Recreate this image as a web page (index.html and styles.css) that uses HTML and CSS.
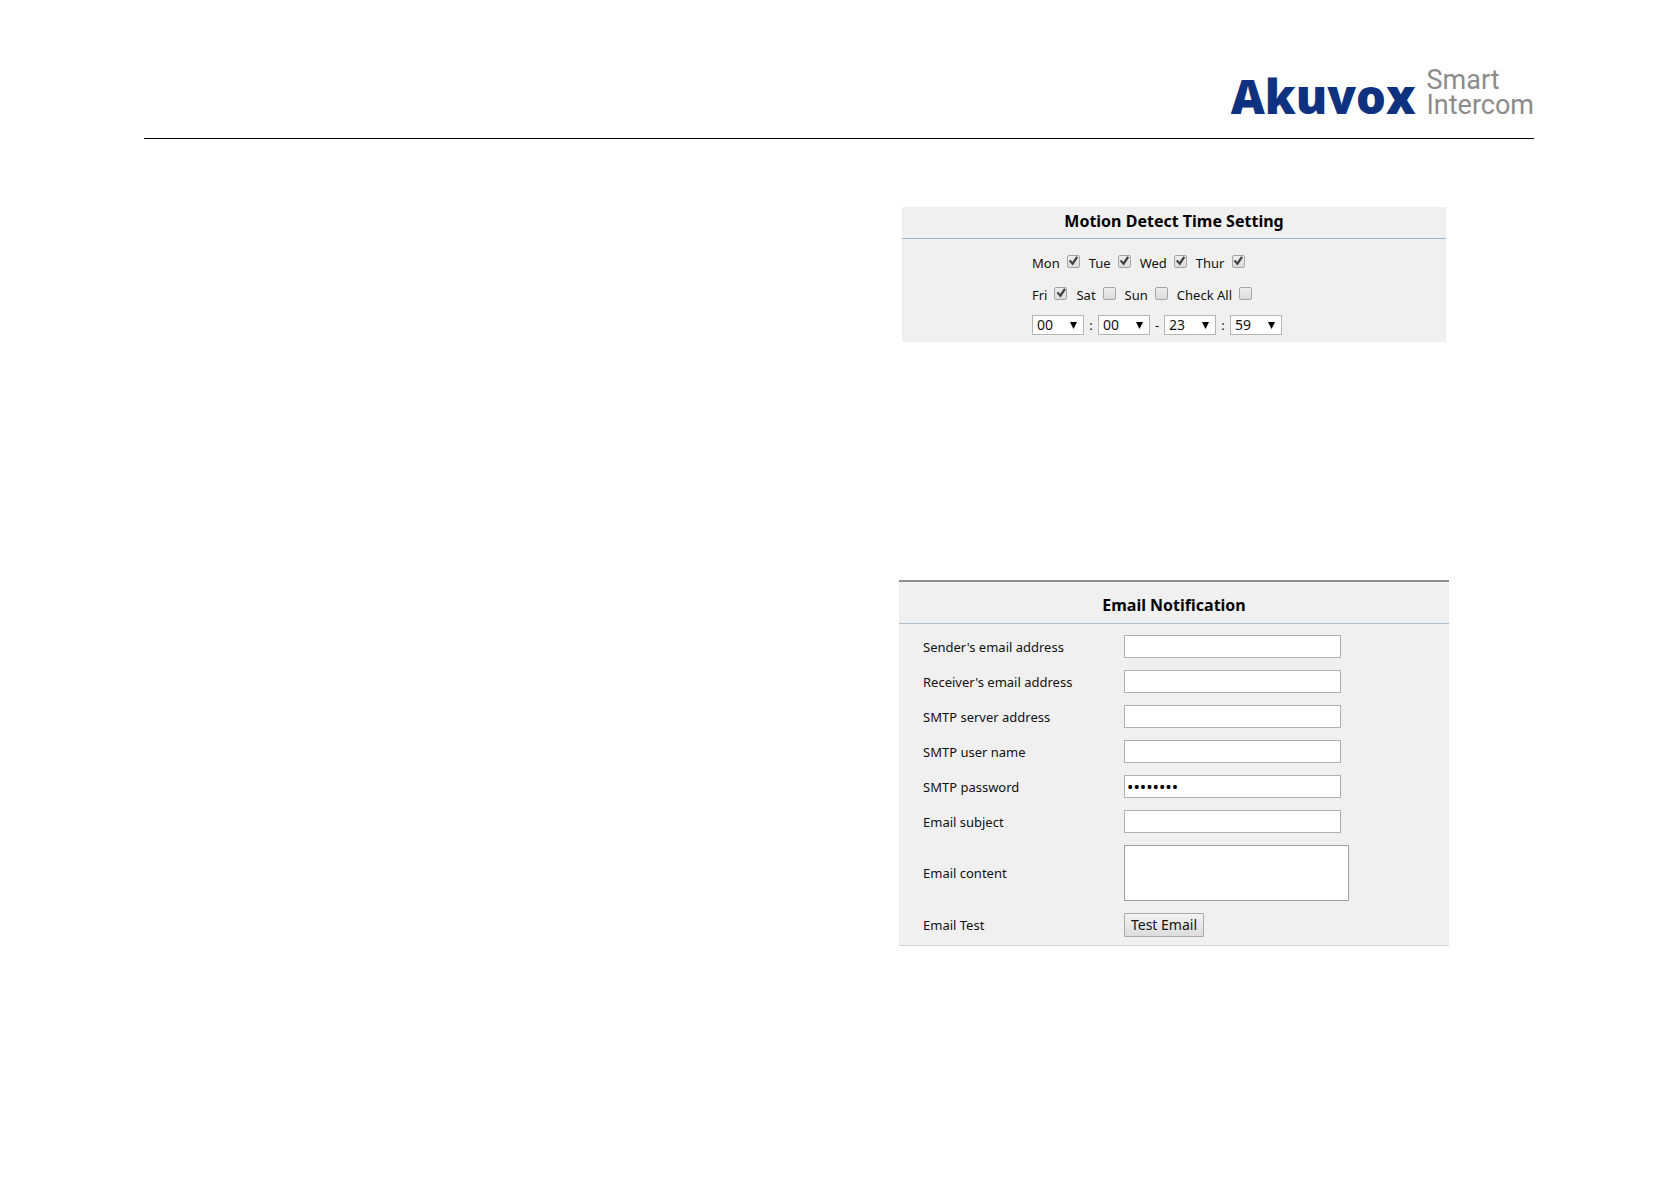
FILE: index.html
```html
<!DOCTYPE html>
<html lang="en">
<head>
    <meta charset="UTF-8">
    <meta name="viewport" content="width=device-width, initial-scale=1.0">
    <title>Akuvox Smart Intercom</title>
    <link rel="stylesheet" href="styles.css">
</head>
<body>
    <header class="page-header">
        <div class="logo">
            <div class="brand">Akuvox</div>
            <div class="tagline">
                <div>Smart</div>
                <div>Intercom</div>
            </div>
        </div>
    </header>

    <main class="content">
        <!-- Motion detect schedule -->
        <section class="panel motion">
            <h2>Motion Detect Time Setting</h2>
            <form class="schedule">
                <div class="days">
                    <label>Mon <input type="checkbox" checked></label>
                    <label>Tue <input type="checkbox" checked></label>
                    <label>Wed <input type="checkbox" checked></label>
                    <label>Thur <input type="checkbox" checked></label>
                </div>
                <div class="days">
                    <label>Fri <input type="checkbox" checked></label>
                    <label>Sat <input type="checkbox"></label>
                    <label>Sun <input type="checkbox"></label>
                    <label>Check All <input type="checkbox"></label>
                </div>
                <div class="times">
                    <select aria-label="Start hour"><option>00</option></select>
                    <span>:</span>
                    <select aria-label="Start minute"><option>00</option></select>
                    <span>-</span>
                    <select aria-label="End hour"><option>23</option></select>
                    <span>:</span>
                    <select aria-label="End minute"><option>59</option></select>
                </div>
            </form>
        </section>

        <!-- Email notification -->
        <section class="panel email">
            <h2>Email Notification</h2>
            <form class="fields">
                <label for="sender">Sender's email address</label>
                <input type="text" id="sender">
                <label for="receiver">Receiver's email address</label>
                <input type="text" id="receiver">
                <label for="server">SMTP server address</label>
                <input type="text" id="server">
                <label for="user">SMTP user name</label>
                <input type="text" id="user">
                <label for="password">SMTP password</label>
                <input type="password" id="password" value="password">
                <label for="subject">Email subject</label>
                <input type="text" id="subject">
                <label for="message">Email content</label>
                <textarea id="message"></textarea>
                <label for="test">Email Test</label>
                <button type="button" id="test">Test Email</button>
            </form>
        </section>
    </main>
</body>
</html>
```
FILE: styles.css
```css
* {
    box-sizing: border-box;
}
body {
    margin: 0;
    padding: 0 144px;
    background-color: white;
    color: #111;
    font-family: "Noto Sans", sans-serif;
    font-size: 13px;
    line-height: 20px;
}
.page-header {
    display: flex;
    justify-content: flex-end;
    align-items: flex-end;
    height: 139px;
    padding-bottom: 10px;
    border-bottom: 1px solid #000;
}
.logo {
    display: flex;
    align-items: last baseline;
    gap: 11px;
}
.brand {
    color: #0e3280;
    font-family: "Open Sans", sans-serif;
    font-size: 47px;
    font-weight: 800;
    line-height: 64px;
}
.tagline {
    color: #8c8c8c;
    font-family: Roboto, sans-serif;
    font-size: 27px;
    line-height: 25px;
}
.content {
    display: grid;
    grid-template-columns: 550px;
    justify-content: end;
    justify-items: center;
    gap: 238px;
    padding: 68px 85px 0 0;
}
.panel {
    width: 100%;
    background-color: #f0f0f0;
}
.panel h2 {
    margin: 0;
    color: #000;
    font-size: 16px;
    line-height: 20px;
    text-align: center;
}
.motion {
    max-width: 544px;
    padding-bottom: 7px;
}
.motion h2 {
    padding: 4px 0 7px;
    border-bottom: 1px solid #93b7d3;
}
.schedule {
    padding: 8px 0 0 130px;
}
.days {
    display: flex;
    gap: 9px;
    height: 32px;
    align-items: center;
}
.days label {
    display: flex;
    align-items: center;
    gap: 7px;
}
input[type="checkbox"] {
    appearance: none;
    width: 13px;
    height: 13px;
    margin: 0 0 4px;
    border: 1px solid #a5a5a5;
    border-radius: 2px;
    background: linear-gradient(#ededed, #dcdcdc);
}
input[type="checkbox"]:checked::before {
    content: "";
    display: block;
    width: 11px;
    height: 11px;
    background-color: #404040;
    clip-path: polygon(10% 50%, 26% 38%, 42% 58%, 78% 6%, 95% 18%, 46% 92%);
}
.times {
    display: flex;
    align-items: center;
    padding-top: 4px;
}
.times span {
    width: 14px;
    text-align: center;
}
select {
    appearance: none;
    width: 52px;
    height: 20px;
    padding: 0 4px;
    border: 1px solid #b5b5b5;
    border-radius: 0;
    background: white url("data:image/svg+xml,%3Csvg xmlns='http://www.w3.org/2000/svg' width='7' height='7'%3E%3Cpath d='M0 0h7L3.5 7z'/%3E%3C/svg%3E") no-repeat right 6px center;
    color: #111;
    font: inherit;
    font-size: 14px;
    line-height: 18px;
}
.email {
    border-top: 2px solid #8f8f8f;
    border-bottom: 1px solid #d5d5d5;
}
.email h2 {
    padding: 13px 0 8px;
    border-bottom: 1px solid #b0bfcc;
}
.fields {
    display: grid;
    grid-template-columns: 201px 1fr;
    row-gap: 12px;
    align-items: center;
    justify-items: start;
    padding: 11px 24px 8px;
}
.fields input, textarea {
    width: 217px;
    height: 23px;
    padding: 0 2px;
    border: 1px solid #b0b0b0;
    border-radius: 0;
    background-color: white;
    color: #000;
    font: inherit;
}
.fields input[type="password"] {
    font-size: 17px;
}
.fields textarea {
    display: block;
    width: 225px;
    height: 56px;
    border-color: #a0a0a0;
    resize: none;
}
button {
    width: 80px;
    height: 24px;
    padding: 0;
    border: 1px solid #a9a9a9;
    border-radius: 1px;
    background: linear-gradient(#f3f3f3, #dcdcdc);
    color: #111;
    font: inherit;
    font-size: 14px;
}
```
